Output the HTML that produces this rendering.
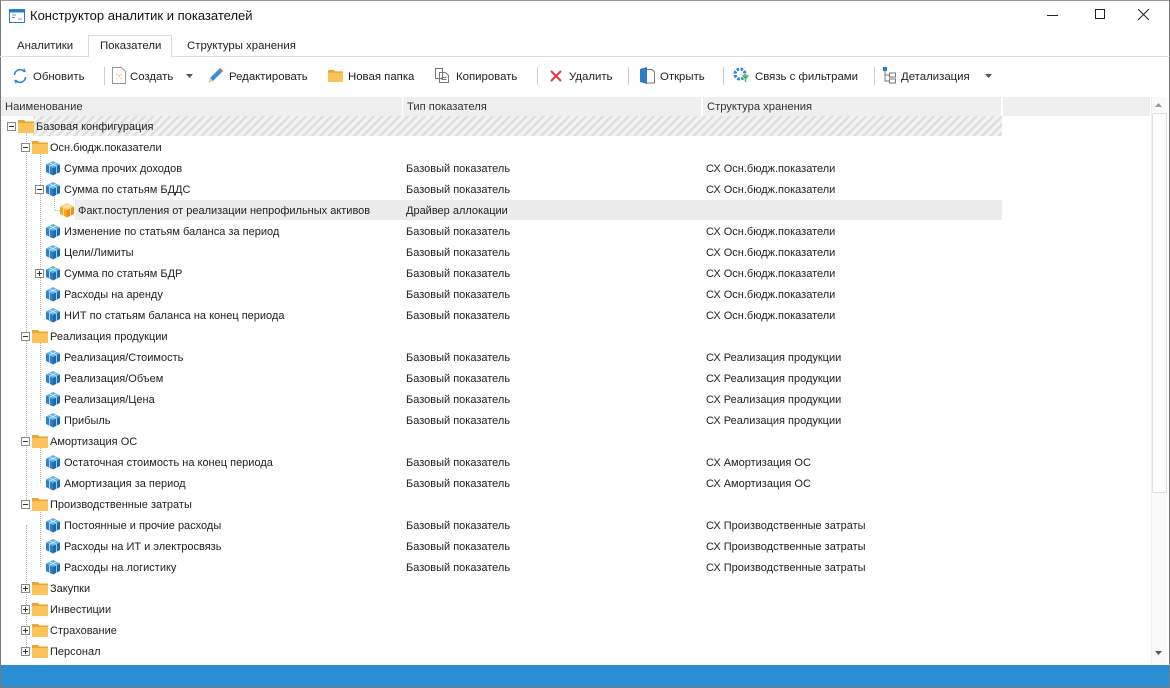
<!DOCTYPE html>
<html><head><meta charset="utf-8">
<style>
*{margin:0;padding:0;box-sizing:border-box}
body{width:1170px;height:688px;overflow:hidden;background:#fff;font-family:"Liberation Sans",sans-serif;font-size:12px;color:#222;position:relative}
.win{position:absolute;left:0;top:0;width:1170px;height:688px;border:1px solid #7a7a7a;border-top-color:#9a9a9a}
.a{position:absolute;white-space:nowrap}
.tb{position:absolute;top:68px;height:18px;line-height:18px;font-size:11.4px;color:#222}
.sep{position:absolute;top:67px;width:1px;height:18px;background:#cfcfcf}
.hdr{position:absolute;top:97px;height:19px;background:#efefef;line-height:21px;padding-left:4px;color:#333;font-size:11.2px;overflow:hidden}
.r{position:absolute;height:21px;line-height:23px;font-size:11px;color:#222}
.ex{position:absolute;width:9px;height:9px;border:1px solid #8a8a8a;background:#fff}
.ex:before{content:"";position:absolute;left:1px;top:3px;width:5px;height:1px;background:#333}
.ex.p:after{content:"";position:absolute;left:3px;top:1px;width:1px;height:5px;background:#333}
.vl{position:absolute;width:1px;border-left:1px dotted #b5b5b5}
.hl{position:absolute;height:1px;border-top:1px dotted #b5b5b5}
</style></head><body>
<svg width="0" height="0" style="position:absolute">
<defs>
<symbol id="cube" viewBox="0 0 16 16"><path d="M8 1 L15 4.5 L8 8 L1 4.5Z" fill="#5fb3ea"/><path d="M1 4.5 L8 8 L8 15.5 L1 12Z" fill="#2d7fc4"/><path d="M15 4.5 L8 8 L8 15.5 L15 12Z" fill="#1c6aae"/><path d="M4.5 2.8 L11.5 6.3 M11.5 2.8 L4.5 6.3 M4.5 6.2 V13.8 M11.5 6.2 V13.8" stroke="#e8f4fc" stroke-width="0.7" fill="none"/></symbol>
<symbol id="ocube" viewBox="0 0 16 16"><path d="M8 1 L15 4.5 L8 8 L1 4.5Z" fill="#ffd27a"/><path d="M1 4.5 L8 8 L8 15.5 L1 12Z" fill="#f5a623"/><path d="M15 4.5 L8 8 L8 15.5 L15 12Z" fill="#e8921a"/><path d="M4.5 2.8 L11.5 6.3 M11.5 2.8 L4.5 6.3 M4.5 6.2 V13.8 M11.5 6.2 V13.8" stroke="#fff4dc" stroke-width="0.7" fill="none"/></symbol>
<symbol id="fold" viewBox="0 0 16 14"><path d="M0 1 H6 L7.5 2.5 H16 V14 H0Z" fill="#e8a535"/><rect x="0" y="4" width="16" height="10" fill="#fcc35a"/></symbol>
<pattern id="hatch" width="6" height="6" patternUnits="userSpaceOnUse" patternTransform="rotate(45)"><rect width="6" height="6" fill="#f3f3f3"/><rect width="2.5" height="6" fill="#dedede"/></pattern>
</defs></svg>
<div class="win"></div>
<svg class="a" style="left:9px;top:9px" width="16" height="14" viewBox="0 0 16 14"><rect x=".5" y=".5" width="15" height="13" fill="#fff" stroke="#2a7cc7"/><rect x=".5" y=".5" width="15" height="3" fill="#2a7cc7"/><path d="M3 6h4M3 8.5h3M9 10h4" stroke="#6a9fd0"/></svg>
<div class="a" style="left:30px;top:8px;font-size:13px;color:#111">Конструктор аналитик и показателей</div>
<div class="a" style="left:1047px;top:15px;width:11px;height:1px;background:#222"></div>
<div class="a" style="left:1095px;top:9px;width:10px;height:10px;border:1px solid #222"></div>
<svg class="a" style="left:1138px;top:9px" width="11" height="11"><path d="M0 0L11 11M11 0L0 11" stroke="#222"/></svg>
<div class="a" style="left:0;top:56px;width:1170px;height:1px;background:#dcdcdc"></div>
<div class="a" style="left:88px;top:35px;width:84px;height:22px;background:#fff;border:1px solid #dcdcdc;border-bottom:none"></div>
<div class="a" style="left:17px;top:40px;font-size:11.4px">Аналитики</div>
<div class="a" style="left:100px;top:40px;font-size:11.4px">Показатели</div>
<div class="a" style="left:187px;top:40px;font-size:11.4px">Структуры хранения</div>
<svg class="a" style="left:12px;top:68px" width="16" height="16" viewBox="0 0 16 16"><path d="M2.5 7A5.5 5.5 0 0 1 12.5 4" stroke="#2a86d0" stroke-width="1.6" fill="none"/><path d="M13.5 9A5.5 5.5 0 0 1 3.5 12" stroke="#2a86d0" stroke-width="1.6" fill="none"/><path d="M10 2.5L14 4.5L12.5 0.5Z M6 13.5L2 11.5L3.5 15.5Z" fill="#2a86d0"/></svg>
<div class="tb" style="left:33px">Обновить</div>
<div class="sep" style="left:104px"></div>
<svg class="a" style="left:112px;top:67px" width="14" height="17"><path d="M.5 .5H9.5L13.5 4.5V16.5H.5Z" fill="#fff" stroke="#999"/><path d="M5 7v1M9 7v1M5 11v1M9 11v1M6 9h2" stroke="#e8a535"/></svg>
<div class="tb" style="left:130px">Создать</div>
<svg class="a" style="left:186px;top:74px" width="7" height="4"><path d="M0 0h7L3.5 4Z" fill="#555"/></svg>
<svg class="a" style="left:207px;top:67px" width="17" height="17" viewBox="0 0 17 17"><path d="M3 11L12 2L15 5L6 14Z" fill="#3b8fd8"/><path d="M3 11L6 14L1.5 15.5Z" fill="#f0c48a"/><path d="M12 2L15 5L16 4L13 1Z" fill="#e05050"/></svg>
<div class="tb" style="left:229px">Редактировать</div>
<svg class="a" style="left:328px;top:69px" width="15" height="13" viewBox="0 0 16 14"><use href="#fold"/></svg>
<div class="tb" style="left:348px">Новая папка</div>
<svg class="a" style="left:435px;top:68px" width="14" height="15"><path d="M.5 .5h7v10h-7z M4.5 4.5h6l3 3v7h-9z" fill="#fff" stroke="#777"/><path d="M6.5 9.5h5M6.5 11.5h5" stroke="#777"/></svg>
<div class="tb" style="left:456px">Копировать</div>
<div class="sep" style="left:537px"></div>
<svg class="a" style="left:550px;top:70px" width="12" height="12"><path d="M1 1L11 11M11 1L1 11" stroke="#e03a3a" stroke-width="2"/></svg>
<div class="tb" style="left:569px">Удалить</div>
<div class="sep" style="left:628px"></div>
<svg class="a" style="left:640px;top:67px" width="15" height="17"><path d="M0 2L7 0V17L0 15Z" fill="#2a7cc7"/><path d="M7 2.5h5l2.5 2.5v11H7" fill="#fff" stroke="#777"/></svg>
<div class="tb" style="left:660px">Открыть</div>
<div class="sep" style="left:723px"></div>
<svg class="a" style="left:733px;top:67px" width="18" height="17" viewBox="0 0 18 17"><circle cx="7" cy="7" r="5" fill="none" stroke="#2a86d0" stroke-width="3" stroke-dasharray="2.5 1.5"/><path d="M8 8h9l-3.5 4v4l-2-1v-3Z" fill="#3fb85a" stroke="#fff" stroke-width=".6"/></svg>
<div class="tb" style="left:755px">Связь с фильтрами</div>
<div class="sep" style="left:874px"></div>
<svg class="a" style="left:883px;top:67px" width="14" height="17"><rect x="0" y="0" width="4" height="4" fill="#2a7cc7"/><path d="M2 4v10h4M2 8h4" stroke="#777" fill="none"/><rect x="6.5" y="6" width="6" height="4" fill="#fff" stroke="#777"/><rect x="6.5" y="12" width="6" height="4" fill="#fff" stroke="#777"/></svg>
<div class="tb" style="left:901px">Детализация</div>
<svg class="a" style="left:985px;top:74px" width="7" height="4"><path d="M0 0h7L3.5 4Z" fill="#555"/></svg>
<div class="hdr" style="left:1px;width:401px">Наименование</div>
<div class="hdr" style="left:403px;width:298px">Тип показателя</div>
<div class="hdr" style="left:703px;width:298px">Структура хранения</div>
<div class="hdr" style="left:1003px;width:147px"></div>
<div class="a" style="left:1151px;top:97px;width:16px;height:566px;background:#fafafa;border-left:1px solid #eee"></div>
<svg class="a" style="left:1155px;top:103px" width="7" height="4"><path d="M0 4h7L3.5 0Z" fill="#999"/></svg>
<div class="a" style="left:1152px;top:113px;width:15px;height:380px;background:#fff;border:1px solid #e0e0e0;border-radius:2px"></div>
<svg class="a" style="left:1155px;top:651px" width="7" height="4"><path d="M0 0h7L3.5 4Z" fill="#555"/></svg>
<div class="a" style="left:1px;top:665px;width:1168px;height:22px;background:#2a8fd2"></div>
<svg class="a" style="left:33px;top:116px" width="969" height="20"><rect width="969" height="20" fill="url(#hatch)"/></svg>
<div class="a" style="left:75px;top:200px;width:927px;height:20px;background:#ececec"></div>
<div class="vl" style="left:26px;top:132px;height:372px"></div>
<div class="vl" style="left:40px;top:153px;height:162px"></div>
<div class="vl" style="left:40px;top:342px;height:78px"></div>
<div class="vl" style="left:40px;top:447px;height:36px"></div>
<div class="vl" style="left:40px;top:510px;height:57px"></div>
<div class="vl" style="left:26px;top:525px;height:126px"></div>
<div class="vl" style="left:54px;top:195px;height:15px"></div>
<div class="hl" style="left:55px;top:210px;width:5px"></div>
<div class="ex" style="left:7px;top:122px"></div><svg class="a" style="left:18px;top:119px" width="16" height="14" viewBox="0 0 16 14"><use href="#fold"/></svg><div class="r" style="left:36px;top:116px">Базовая конфигурация</div>
<div class="ex" style="left:21px;top:143px"></div><svg class="a" style="left:32px;top:140px" width="16" height="14" viewBox="0 0 16 14"><use href="#fold"/></svg><div class="r" style="left:50px;top:137px">Осн.бюдж.показатели</div>
<svg class="a" style="left:45px;top:160px" width="16" height="16"><use href="#cube"/></svg><div class="r" style="left:64px;top:158px">Сумма прочих доходов</div><div class="r" style="left:406px;top:158px">Базовый показатель</div><div class="r" style="left:706px;top:158px">СХ Осн.бюдж.показатели</div>
<div class="ex" style="left:35px;top:185px"></div><svg class="a" style="left:45px;top:181px" width="16" height="16"><use href="#cube"/></svg><div class="r" style="left:64px;top:179px">Сумма по статьям БДДС</div><div class="r" style="left:406px;top:179px">Базовый показатель</div><div class="r" style="left:706px;top:179px">СХ Осн.бюдж.показатели</div>
<svg class="a" style="left:59px;top:202px" width="16" height="16"><use href="#ocube"/></svg><div class="r" style="left:78px;top:200px">Факт.поступления от реализации непрофильных активов</div><div class="r" style="left:406px;top:200px">Драйвер аллокации</div>
<svg class="a" style="left:45px;top:223px" width="16" height="16"><use href="#cube"/></svg><div class="r" style="left:64px;top:221px">Изменение по статьям баланса за период</div><div class="r" style="left:406px;top:221px">Базовый показатель</div><div class="r" style="left:706px;top:221px">СХ Осн.бюдж.показатели</div>
<svg class="a" style="left:45px;top:244px" width="16" height="16"><use href="#cube"/></svg><div class="r" style="left:64px;top:242px">Цели/Лимиты</div><div class="r" style="left:406px;top:242px">Базовый показатель</div><div class="r" style="left:706px;top:242px">СХ Осн.бюдж.показатели</div>
<div class="ex p" style="left:35px;top:269px"></div><svg class="a" style="left:45px;top:265px" width="16" height="16"><use href="#cube"/></svg><div class="r" style="left:64px;top:263px">Сумма по статьям БДР</div><div class="r" style="left:406px;top:263px">Базовый показатель</div><div class="r" style="left:706px;top:263px">СХ Осн.бюдж.показатели</div>
<svg class="a" style="left:45px;top:286px" width="16" height="16"><use href="#cube"/></svg><div class="r" style="left:64px;top:284px">Расходы на аренду</div><div class="r" style="left:406px;top:284px">Базовый показатель</div><div class="r" style="left:706px;top:284px">СХ Осн.бюдж.показатели</div>
<svg class="a" style="left:45px;top:307px" width="16" height="16"><use href="#cube"/></svg><div class="r" style="left:64px;top:305px">НИТ по статьям баланса на конец периода</div><div class="r" style="left:406px;top:305px">Базовый показатель</div><div class="r" style="left:706px;top:305px">СХ Осн.бюдж.показатели</div>
<div class="ex" style="left:21px;top:332px"></div><svg class="a" style="left:32px;top:329px" width="16" height="14" viewBox="0 0 16 14"><use href="#fold"/></svg><div class="r" style="left:50px;top:326px">Реализация продукции</div>
<svg class="a" style="left:45px;top:349px" width="16" height="16"><use href="#cube"/></svg><div class="r" style="left:64px;top:347px">Реализация/Стоимость</div><div class="r" style="left:406px;top:347px">Базовый показатель</div><div class="r" style="left:706px;top:347px">СХ Реализация продукции</div>
<svg class="a" style="left:45px;top:370px" width="16" height="16"><use href="#cube"/></svg><div class="r" style="left:64px;top:368px">Реализация/Объем</div><div class="r" style="left:406px;top:368px">Базовый показатель</div><div class="r" style="left:706px;top:368px">СХ Реализация продукции</div>
<svg class="a" style="left:45px;top:391px" width="16" height="16"><use href="#cube"/></svg><div class="r" style="left:64px;top:389px">Реализация/Цена</div><div class="r" style="left:406px;top:389px">Базовый показатель</div><div class="r" style="left:706px;top:389px">СХ Реализация продукции</div>
<svg class="a" style="left:45px;top:412px" width="16" height="16"><use href="#cube"/></svg><div class="r" style="left:64px;top:410px">Прибыль</div><div class="r" style="left:406px;top:410px">Базовый показатель</div><div class="r" style="left:706px;top:410px">СХ Реализация продукции</div>
<div class="ex" style="left:21px;top:437px"></div><svg class="a" style="left:32px;top:434px" width="16" height="14" viewBox="0 0 16 14"><use href="#fold"/></svg><div class="r" style="left:50px;top:431px">Амортизация ОС</div>
<svg class="a" style="left:45px;top:454px" width="16" height="16"><use href="#cube"/></svg><div class="r" style="left:64px;top:452px">Остаточная стоимость на конец периода</div><div class="r" style="left:406px;top:452px">Базовый показатель</div><div class="r" style="left:706px;top:452px">СХ Амортизация ОС</div>
<svg class="a" style="left:45px;top:475px" width="16" height="16"><use href="#cube"/></svg><div class="r" style="left:64px;top:473px">Амортизация за период</div><div class="r" style="left:406px;top:473px">Базовый показатель</div><div class="r" style="left:706px;top:473px">СХ Амортизация ОС</div>
<div class="ex" style="left:21px;top:500px"></div><svg class="a" style="left:32px;top:497px" width="16" height="14" viewBox="0 0 16 14"><use href="#fold"/></svg><div class="r" style="left:50px;top:494px">Производственные затраты</div>
<svg class="a" style="left:45px;top:517px" width="16" height="16"><use href="#cube"/></svg><div class="r" style="left:64px;top:515px">Постоянные и прочие расходы</div><div class="r" style="left:406px;top:515px">Базовый показатель</div><div class="r" style="left:706px;top:515px">СХ Производственные затраты</div>
<svg class="a" style="left:45px;top:538px" width="16" height="16"><use href="#cube"/></svg><div class="r" style="left:64px;top:536px">Расходы на ИТ и электросвязь</div><div class="r" style="left:406px;top:536px">Базовый показатель</div><div class="r" style="left:706px;top:536px">СХ Производственные затраты</div>
<svg class="a" style="left:45px;top:559px" width="16" height="16"><use href="#cube"/></svg><div class="r" style="left:64px;top:557px">Расходы на логистику</div><div class="r" style="left:406px;top:557px">Базовый показатель</div><div class="r" style="left:706px;top:557px">СХ Производственные затраты</div>
<div class="ex p" style="left:21px;top:584px"></div><svg class="a" style="left:32px;top:581px" width="16" height="14" viewBox="0 0 16 14"><use href="#fold"/></svg><div class="r" style="left:50px;top:578px">Закупки</div>
<div class="ex p" style="left:21px;top:605px"></div><svg class="a" style="left:32px;top:602px" width="16" height="14" viewBox="0 0 16 14"><use href="#fold"/></svg><div class="r" style="left:50px;top:599px">Инвестиции</div>
<div class="ex p" style="left:21px;top:626px"></div><svg class="a" style="left:32px;top:623px" width="16" height="14" viewBox="0 0 16 14"><use href="#fold"/></svg><div class="r" style="left:50px;top:620px">Страхование</div>
<div class="ex p" style="left:21px;top:647px"></div><svg class="a" style="left:32px;top:644px" width="16" height="14" viewBox="0 0 16 14"><use href="#fold"/></svg><div class="r" style="left:50px;top:641px">Персонал</div>
</body></html>
